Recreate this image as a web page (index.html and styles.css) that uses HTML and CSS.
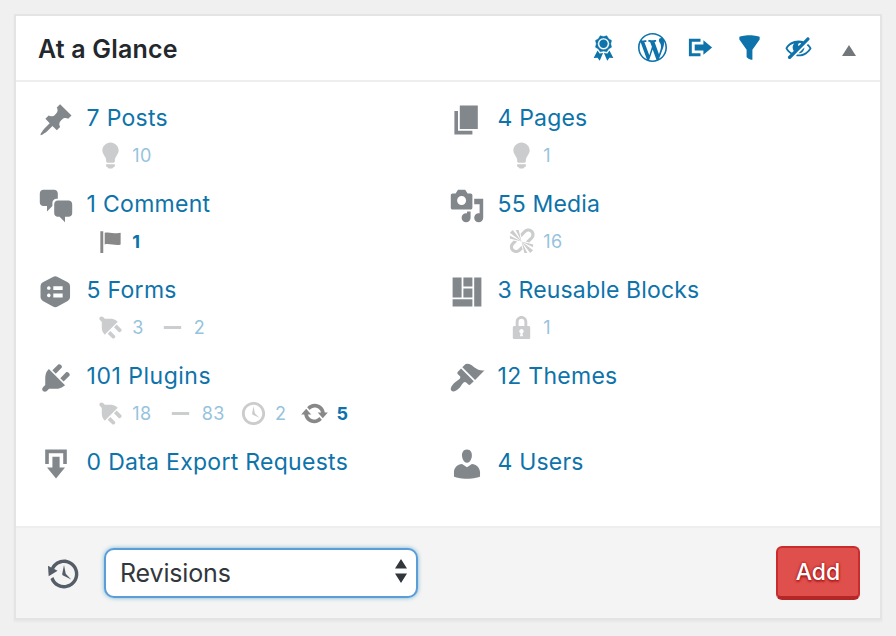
FILE: index.html
```html
<!DOCTYPE html>
<html lang="en">
<head>
<meta charset="utf-8">
<title>At a Glance</title>
<link rel="stylesheet" href="styles.css">
</head>
<body>
<svg class="sprite" aria-hidden="true">
  <symbol id="pin" viewBox="0 0 20 20"><path d="M10.44 3.02l1.82-1.82 6.36 6.35-1.83 1.82c-1.05-.68-2.48-.57-3.41.36l-.75.75c-.92.93-1.04 2.35-.35 3.41l-1.83 1.82-2.41-2.41-2.8 2.79c-.42.42-3.38 2.71-3.8 2.29s1.86-3.39 2.28-3.81l2.79-2.79L4.1 9.36l1.83-1.82c1.05.69 2.48.57 3.4-.36l.75-.75c.93-.92 1.05-2.35.36-3.41z"/></symbol>
  <symbol id="bulb" viewBox="0 0 20 20"><path d="M10 1c3.11 0 5.63 2.52 5.63 5.62 0 1.84-2.03 4.58-2.03 4.58-.33.44-.6 1.25-.6 1.8v1c0 .55-.45 1-1 1H8c-.55 0-1-.45-1-1v-1c0-.55-.27-1.36-.6-1.8 0 0-2.02-2.74-2.02-4.58C4.38 3.52 6.89 1 10 1zM7 16.87V16h6v.87c0 .62-.13 1.13-.75 1.13H12c0 .62-.4 1-1.02 1h-2c-.61 0-.98-.38-.98-1h-.25c-.62 0-.75-.51-.75-1.13z"/></symbol>
  <symbol id="page" viewBox="0 0 20 20"><path d="M6 15V2h10v13H6zm-1 1h8v2H3V5h2v11z"/></symbol>
  <symbol id="chat" viewBox="0 0 20 20"><path d="M11 6h-.82C9.07 6 8 7.2 8 8.16V10l-3 3v-3H3c-1.1 0-2-.9-2-2V3c0-1.1.9-2 2-2h6c1.1 0 2 .9 2 2v3zm0 1h6c1.1 0 2 .9 2 2v5c0 1.1-.9 2-2 2h-2v3l-3-3h-1c-1.1 0-2-.9-2-2V9c0-1.1.9-2 2-2z"/></symbol>
  <symbol id="flag" viewBox="0 0 20 20"><path d="M5 18V3H3v15h2zm1-6V4c3-1 7 1 11 0v8c-3 1.27-8-1-11 0z"/></symbol>
  <symbol id="media" viewBox="0 0 20 20"><path d="M13 11V4c0-.55-.45-1-1-1h-1.67L9 1H5L3.67 3H2c-.55 0-1 .45-1 1v7c0 .55.45 1 1 1h10c.55 0 1-.45 1-1zM7 4.5c1.38 0 2.5 1.12 2.5 2.5S8.38 9.5 7 9.5 4.5 8.38 4.5 7 5.62 4.5 7 4.5zM14 6h5v10.5c0 1.38-1.12 2.5-2.5 2.5S14 17.88 14 16.5s1.12-2.5 2.5-2.5c.17 0 .34.02.5.05V9h-3V6zm-4 8.05V13h2v3.5c0 1.38-1.12 2.5-2.5 2.5S7 17.88 7 16.5 8.12 14 9.5 14c.17 0 .34.02.5.05z"/></symbol>
  <symbol id="unlink" viewBox="0 0 20 20"><path d="M17.74 2.26c1.68 1.69 1.68 4.41 0 6.1l-1.53 1.52c-.32.33-.69.58-1.08.77L13 10l1.69-1.64.76-.77.76-.76c.84-.84.84-2.2 0-3.04-.84-.85-2.2-.85-3.04 0l-.77.76-.76.76L10 7l-.65-2.14c.19-.38.44-.75.77-1.07l1.52-1.53c1.69-1.68 4.42-1.68 6.1 0zM2 4l8 6-6-8zm4-2l4 8-2-8H6zM2 6l8 4-8-2V6zm7.36 7.69L10 13l.74 2.35-1.38 1.39c-1.69 1.68-4.41 1.68-6.1 0-1.68-1.68-1.68-4.42 0-6.1l1.39-1.38L7 10l-.69.64-1.52 1.53c-.85.84-.85 2.2 0 3.04.84.85 2.2.85 3.04 0zM18 16l-8-6 6 8zm-4 2l-4-8 2 8h2zm4-4l-8-4 8 2v2z"/></symbol>
  <symbol id="forms" viewBox="0 0 20 20"><path fill-rule="evenodd" d="M8.3 1.6Q9.6 .85 10.9 1.6L16.5 4.6Q17.8 5.3 17.8 6.7V12.9Q17.8 14.3 16.5 15L10.9 18.1Q9.6 18.8 8.3 18.1L2.7 15Q1.4 14.3 1.4 12.9V6.7Q1.4 5.3 2.7 4.6ZM8.5 6.8V8.9H13.7V6.8ZM8.5 10.9V13H13.7V10.9ZM6 6.8a1 1 0 1 0 .01 0ZM6 10.9a1 1 0 1 0 .01 0Z"/></symbol>
  <symbol id="plug" viewBox="0 0 20 20"><path d="M13.11 4.36L9.87 7.6 8 5.73l3.24-3.24c.35-.34 1.05-.2 1.56.32.52.51.66 1.21.31 1.55zm-8 1.77l.91-1.12 9.01 9.01-1.19.84c-.71.71-2.63 1.16-3.82 1.16H6.14L4.9 17.26c-.59.59-1.54.59-2.12 0-.59-.58-.59-1.53 0-2.12l1.24-1.24v-3.88c0-1.13.4-3.19 1.09-3.89zm7.26 3.97l3.24-3.24c.34-.35 1.04-.21 1.55.31.52.51.66 1.21.31 1.55l-3.24 3.25z"/></symbol>
  <symbol id="minus" viewBox="0 0 20 20"><path d="M4 9h12v2H4V9z"/></symbol>
  <symbol id="clock" viewBox="0 0 20 20"><path d="M10 2c4.42 0 8 3.58 8 8s-3.58 8-8 8-8-3.58-8-8 3.58-8 8-8zm0 14c3.31 0 6-2.69 6-6s-2.69-6-6-6-6 2.69-6 6 2.69 6 6 6zm-.71-5.29c.07.05.14.1.23.15l-.02.02L14 13l-3.03-3.19L10 5l-.97 4.81h.01c0 .02-.01.05-.02.09S9 9.97 9 10c0 .28.1.52.29.71z"/></symbol>
  <symbol id="update" viewBox="0 0 20 20"><path d="M10.2 3.28c3.53 0 6.43 2.61 6.92 6h2.08l-3.5 4-3.5-4h2.32c-.45-1.97-2.21-3.45-4.32-3.45-1.45 0-2.73.71-3.54 1.78L4.95 5.66C6.23 4.2 8.11 3.28 10.2 3.28zm-.4 13.44c-3.52 0-6.43-2.61-6.92-6H.8l3.5-4c1.17 1.33 2.33 2.67 3.5 4H5.48c.45 1.97 2.21 3.45 4.32 3.45 1.45 0 2.73-.71 3.54-1.78l1.71 1.95c-1.28 1.46-3.15 2.38-5.25 2.38z"/></symbol>
  <symbol id="blocks" viewBox="0 0 20 20"><path d="M2 2h5v11H2zM8 2h5v5H8zM8 8h5v5H8zM14 2h4v16h-4zM2 14h11v4H2z"/></symbol>
  <symbol id="lock" viewBox="0 0 20 20"><path d="M14 9h1c.55 0 1 .45 1 1v7c0 .55-.45 1-1 1H5c-.55 0-1-.45-1-1v-7c0-.55.45-1 1-1h1V6c0-2.21 1.79-4 4-4s4 1.79 4 4v3zm-2 0V6c0-1.1-.9-2-2-2s-2 .9-2 2v3h4zm-1 7l-.36-2.15c.51-.24.86-.75.86-1.35 0-.83-.67-1.5-1.5-1.5s-1.5.67-1.5 1.5c0 .6.35 1.11.86 1.35L9 16h2z"/></symbol>
  <symbol id="brush" viewBox="0 0 20 20"><path d="M14.48 11.06L7.41 3.99l1.5-1.5c.5-.56 2.3-.47 3.51.32 1.21.8 1.43 1.28 2.91 2.1 1.18.64 2.45 1.26 4.45.85zm-.71.71L6.7 4.7 4.93 6.47c-.39.39-.39 1.02 0 1.41l1.06 1.06c.39.39.39 1.03 0 1.42-.6.6-1.43 1.11-2.21 1.69-.35.26-.7.53-1.01.84C1.43 14.23.4 16.08 1.4 17.07c.99 1 2.84-.03 4.18-1.36.31-.31.58-.66.85-1.02.57-.78 1.08-1.61 1.69-2.21.39-.39 1.02-.39 1.41 0l1.06 1.06c.39.39 1.02.39 1.41 0z"/></symbol>
  <symbol id="download" viewBox="0 0 20 20"><path d="M14.01 4v6h2V2H4v8h2.01V4h8zm-2 2v6h3l-5 6-5-6h3V6h4z"/></symbol>
  <symbol id="user" viewBox="0 0 20 20"><path d="M10 9.25c-2.27 0-2.73-3.44-2.73-3.44C7 4.02 7.82 2 9.97 2c2.16 0 2.98 2.02 2.71 3.81 0 0-.41 3.44-2.68 3.44zm0 2.57L12.72 10c2.39 0 4.52 2.33 4.52 4.53v2.49s-3.65 1.13-7.24 1.13c-3.65 0-7.24-1.13-7.24-1.13v-2.49c0-2.25 1.94-4.48 4.47-4.48z"/></symbol>
  <symbol id="award" viewBox="0 0 20 20"><path d="M4.46 5.16L5 7.46l-.54 2.29 2.01 1.24L7.7 13l2.3-.54 2.3.54 1.23-2.01 2.01-1.24L15 7.46l.54-2.3-2-1.24-1.24-2.01-2.3.55-2.29-.54-1.25 2zm5.55 6.34a4.05 4.05 0 1 1 0-8.1 4.05 4.05 0 0 1 0 8.1z" stroke="currentColor" stroke-width=".3"/><circle cx="10" cy="7.45" r="2.9"/><path d="M5.9 12.1L3.2 17.3l2.7-.3 1.5 2.2 2.3-5.4-2.4.4zM14.1 12.1l2.7 5.2-2.7-.3-1.5 2.2-2.3-5.4 2.4.4z"/></symbol>
  <symbol id="wordpress" viewBox="0 0 20 20"><path d="M20 10c0-5.51-4.49-10-10-10C4.48 0 0 4.49 0 10c0 5.52 4.48 10 10 10 5.51 0 10-4.48 10-10zM7.78 15.37L4.37 6.22c.55-.02 1.17-.08 1.17-.08.5-.06.44-1.13-.06-1.11 0 0-1.45.11-2.37.11-.18 0-.37 0-.58-.01C4.12 2.69 6.87 1.11 10 1.11c2.33 0 4.45.87 6.05 2.34-.68-.11-1.65.39-1.65 1.58 0 .74.45 1.36.9 2.1.35.61.55 1.36.55 2.46 0 1.49-1.4 5-1.4 5l-3.03-8.37c.54-.02.82-.17.82-.17.5-.05.44-1.25-.06-1.22 0 0-1.44.12-2.38.12-.87 0-2.33-.12-2.33-.12-.5-.03-.56 1.2-.06 1.22l.92.08 1.26 3.41zM17.41 10c.24-.64.74-1.87.43-4.25.7 1.29 1.05 2.71 1.05 4.25 0 3.29-1.73 6.24-4.4 7.78.97-2.59 1.94-5.2 2.92-7.78zM6.1 18.09C3.12 16.65 1.11 13.53 1.11 10c0-1.3.23-2.48.72-3.59C3.25 10.3 4.67 14.2 6.1 18.09zm4.03-6.63l2.58 6.98c-.86.29-1.76.45-2.71.45-.79 0-1.57-.11-2.29-.33.81-2.38 1.62-4.74 2.42-7.1z"/></symbol>
  <symbol id="export" viewBox="0 0 20 20"><path d="M4 6h6V4H2v12.01h8V14H4V6zm2 2h6V5l6 5-6 5v-3H6V8z"/></symbol>
  <symbol id="filter" viewBox="0 0 20 20"><path d="M3 4.5v-2s3.34-1 7-1 7 1 7 1v2l-5 7.03v6.97s-1.22-.09-2.25-.59S8 16.5 8 16.5v-4.97z"/></symbol>
  <symbol id="hidden" viewBox="0 0 20 20"><path d="M17.2 3.3l.16.17c.39.39.39 1.02 0 1.41L4.55 17.7c-.39.39-1.03.39-1.41 0l-.17-.17c-.39-.39-.39-1.02 0-1.41l1.59-1.6c-1.57-1-2.76-2.3-3.56-3.93.81-1.65 2.03-2.98 3.64-3.99S8.04 5.09 10 5.09c1.2 0 2.33.21 3.4.6l2.38-2.39c.39-.39 1.03-.39 1.42 0zm-7.09 4.01c-.23.25-.34.54-.34.88 0 .31.12.58.31.81l1.8-1.79c-.13-.12-.28-.21-.45-.26-.11-.01-.28-.03-.49-.04-.33.03-.6.16-.83.4zM2.4 10.59c.69 1.23 1.71 2.25 3.05 3.05l1.28-1.28c-.51-.69-.77-1.47-.77-2.36 0-1.06.36-1.98 1.09-2.76-1.04.27-1.96.7-2.76 1.26-.8.58-1.43 1.27-1.89 2.09zm13.22-2.13l.96-.96c1.02.86 1.83 1.89 2.42 3.09-.81 1.65-2.03 2.98-3.64 3.99s-3.4 1.51-5.36 1.51c-.63 0-1.24-.07-1.83-.18l1.07-1.07c.25.02.5.05.76.05 1.63 0 3.13-.4 4.5-1.21s2.4-1.84 3.1-3.09c-.46-.82-1.09-1.51-1.89-2.09-.03-.01-.06-.03-.09-.04zm-5.58 5.58l4-4c-.01 1.1-.41 2.04-1.18 2.81-.78.78-1.72 1.18-2.82 1.19z"/></symbol>
  <symbol id="backup" viewBox="0 0 20 20"><path d="M13.65 2.88c3.93 2.01 5.48 6.84 3.47 10.77s-6.83 5.48-10.77 3.47c-1.87-.96-3.2-2.56-3.86-4.4l1.64-1.03c.45 1.57 1.52 2.95 3.08 3.76 3.01 1.54 6.69.35 8.23-2.66 1.55-3.01.36-6.69-2.65-8.24C9.78 3.01 6.1 4.2 4.56 7.21l1.88.97-4.95 3.08-.39-5.82 1.78.91C4.9 2.4 9.75.89 13.65 2.88zm-4.36 7.83C9.11 10.53 9 10.28 9 10c0-.07.03-.12.04-.19h-.01L10 5l.97 4.81L14 13l-4.5-2.12.02-.02c-.08-.04-.16-.09-.23-.15z"/></symbol>
</svg>

<section class="panel">
  <header class="panel-head">
    <h2>At a Glance</h2>
    <nav class="tools">
      <svg><use href="#award"/></svg>
      <svg><use href="#wordpress"/></svg>
      <svg><use href="#export"/></svg>
      <svg><use href="#filter"/></svg>
      <svg><use href="#hidden"/></svg>
    </nav>
    <svg class="toggle" viewBox="0 0 14 11"><path d="M7 0l7 11H0z"/></svg>
  </header>

  <ul class="glance">
    <li><svg class="icon"><use href="#pin"/></svg><a>7 Posts</a>
      <div class="meta"><span><svg><use href="#bulb"/></svg>10</span></div></li>
    <li><svg class="icon"><use href="#page"/></svg><a>4 Pages</a>
      <div class="meta"><span><svg><use href="#bulb"/></svg>1</span></div></li>
    <li><svg class="icon"><use href="#chat"/></svg><a>1 Comment</a>
      <div class="meta"><span class="active"><svg><use href="#flag"/></svg>1</span></div></li>
    <li><svg class="icon"><use href="#media"/></svg><a>55 Media</a>
      <div class="meta"><span><svg><use href="#unlink"/></svg>16</span></div></li>
    <li><svg class="icon"><use href="#forms"/></svg><a>5 Forms</a>
      <div class="meta"><span><svg class="turned"><use href="#plug"/></svg>3</span><span><svg><use href="#minus"/></svg>2</span></div></li>
    <li><svg class="icon"><use href="#blocks"/></svg><a>3 Reusable Blocks</a>
      <div class="meta"><span><svg><use href="#lock"/></svg>1</span></div></li>
    <li><svg class="icon"><use href="#plug"/></svg><a class="wide">101 Plugins</a>
      <div class="meta"><span><svg class="turned"><use href="#plug"/></svg>18</span><span><svg><use href="#minus"/></svg>83</span><span><svg><use href="#clock"/></svg>2</span><span class="active"><svg><use href="#update"/></svg>5</span></div></li>
    <li><svg class="icon"><use href="#brush"/></svg><a class="wide">12 Themes</a></li>
    <li><svg class="icon"><use href="#download"/></svg><a>0 Data Export Requests</a></li>
    <li><svg class="icon"><use href="#user"/></svg><a>4 Users</a></li>
  </ul>

  <footer class="panel-foot">
    <svg class="icon"><use href="#backup"/></svg>
    <div class="select"><span>Revisions</span><svg viewBox="0 0 12 24"><path d="M6 0l6 9.5H0zM6 24l6-9.5H0z"/></svg></div>
    <button class="add" type="button">Add</button>
  </footer>
</section>
</body>
</html>
```
FILE: styles.css
```css
* { box-sizing: border-box; }

body {
  margin: 0;
  padding: 14px;
  background: #f0f0f0;
  font-family: Inter, "Liberation Sans", sans-serif;
  color: #23282d;
}

svg { display: block; flex: none; fill: currentColor; }
.sprite { position: absolute; width: 0; height: 0; }

.panel {
  width: 868px;
  height: 606px;
  display: flex;
  flex-direction: column;
  background: #fff;
  border: 2px solid #e4e4e4;
  box-shadow: 0 2px 2px rgba(0, 0, 0, .04);
}

.panel-head {
  flex: none;
  height: 66px;
  display: flex;
  align-items: center;
  padding: 0 24.5px 0 22px;
  border-bottom: 2px solid #eee;
}

h2 {
  margin: 2px auto 0 0;
  font-size: 25px;
  font-weight: 600;
  line-height: 30px;
  letter-spacing: .18px;
}

.tools { display: flex; gap: 19.6px; margin-top: -1px; color: #0d73aa; }
.tools svg { width: 29px; height: 29px; }
.toggle { width: 14px; height: 11px; margin: 4px 0 0 29px; color: #72777c; }

.glance {
  flex: 1;
  min-height: 0;
  margin: 0;
  padding: 18px 0 0 21.6px;
  list-style: none;
  display: grid;
  grid-template-columns: 411px 1fr;
  grid-auto-rows: 86px;
}

.glance li {
  display: grid;
  grid-template-columns: 36px 1fr;
  grid-template-rows: 40px 34px;
  column-gap: 13px;
  align-items: center;
}

.icon { width: 36px; height: 36px; color: #82878c; }
.glance a {
  margin-top: -5px;
  font-size: 23px;
  line-height: 32px;
  letter-spacing: .28px;
  color: #0d73aa;
  white-space: nowrap;
}
.glance li:nth-child(even) a { letter-spacing: .16px; }
.glance .wide { letter-spacing: .5px; }
.glance li:nth-child(even) .wide { letter-spacing: .28px; }

.meta {
  grid-column: 1 / -1;
  display: flex;
  gap: 14px;
  margin-top: -4px;
  padding-left: 58.6px;
  font-size: 18px;
  letter-spacing: .5px;
  color: #96c3dd;
}

.meta span { display: flex; align-items: center; gap: 7px; }
.meta svg { width: 29px; height: 29px; color: #cbcccd; }
.meta .active { font-weight: 700; color: #0d73aa; }
.meta .active svg { color: #888; }
.turned { transform: rotate(90deg); }

.panel-foot {
  flex: none;
  height: 92px;
  display: flex;
  align-items: center;
  padding: 0 20px 0 30px;
  background: #f4f4f4;
  border-top: 2px solid #eee;
}

.panel-foot .icon { color: #555d66; margin-top: 2px; }

.select {
  width: 314px;
  height: 50px;
  margin-left: 22px;
  display: flex;
  align-items: center;
  justify-content: space-between;
  padding: 0 9px 0 14px;
  background: #fff;
  border: 2px solid #5b9dd9;
  border-radius: 10px;
  box-shadow: 0 0 4px rgba(30, 140, 190, .6);
  font-size: 25px;
  letter-spacing: -.15px;
  color: #32373c;
}

.select svg { width: 12px; height: 24px; margin-top: -5px; }

.add {
  width: 84px;
  height: 54px;
  margin-left: auto;
  padding: 0;
  border: 2px solid #c92c2c;
  border-bottom: 4px solid #b52727;
  border-radius: 6px;
  background: #df4f4b;
  color: #fff;
  font: 500 23px/1 Inter, "Liberation Sans", sans-serif;
  text-shadow: 0 0 3px #900, 0 2px 2px #b52727;
}
```
